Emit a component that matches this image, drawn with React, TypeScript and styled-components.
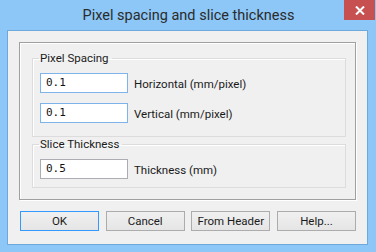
import { createGlobalStyle, styled } from "styled-components";

const GlobalStyle = createGlobalStyle`
  html, body {
    margin: 0;
    padding: 0;
    background: #8cc7f7;
  }
  body {
    font-family: Roboto, "Liberation Sans", Arial, sans-serif;
  }
`;

const Window = styled.div`
  width: 376px;
  height: 252px;
  box-sizing: border-box;
  background: #8cc7f7;
  display: flex;
  flex-direction: column;
  padding: 0 8px 7px 7px;
`;

const TitleBar = styled.div`
  height: 30px;
  display: flex;
  align-items: center;
  position: relative;
`;

const Title = styled.div`
  flex: 1;
  text-align: center;
  font-family: Roboto, "Liberation Sans", sans-serif;
  font-size: 14.5px;
  color: #2b2b2b;
  padding-top: 1px;
  padding-left: 2px;
`;

const CloseButton = styled.div`
  position: absolute;
  right: -7px;
  top: 0;
  width: 31px;
  height: 20px;
  background: #c75050;
  display: flex;
  align-items: center;
  justify-content: center;
`;

const Client = styled.div`
  flex: 1;
  background: #f0f0f0;
  border: 1px solid #6ea9dc;
  display: flex;
  flex-direction: column;
  padding: 11px 11px 12px 11px;
  box-sizing: border-box;
`;

const Frame = styled.div`
  border: 1px solid #a0a0a0;
  box-shadow: 1px 1px 0 #ffffff, inset 1px 1px 0 #ffffff;
  display: flex;
  flex-direction: column;
  padding: 8px 9px 8px 12px;
  height: 158px;
  box-sizing: border-box;
`;

const Group = styled.fieldset<{ $pad: string }>`
  margin: 0;
  border: 1px solid #dcdcdc;
  padding: ${(p) => p.$pad};
  display: flex;
  flex-direction: column;
  gap: 10px;
  box-shadow: inset 1px 1px 0 #fff;
`;

const Legend = styled.legend`
  font-size: 11.5px;
  line-height: 14px;
  color: #1a1a1a;
  padding: 0 3px 0 1px;
  margin-left: -1px;
`;

const Row = styled.div`
  display: flex;
  align-items: center;
  gap: 6px;
`;

const Field = styled.div<{ $focus?: boolean }>`
  width: 88px;
  height: 20px;
  box-sizing: border-box;
  border: 1px solid ${(p) => (p.$focus ? "#7eb4ea" : "#abadb3")};
  background: #fff;
  font-family: "DejaVu Sans Mono", "Liberation Mono", monospace;
  font-size: 11px;
  line-height: 18px;
  padding-left: 5px;
  color: #111;
`;

const Label = styled.span`
  font-size: 11.5px;
  color: #1a1a1a;
  padding-top: 2px;
`;

const ButtonRow = styled.div`
  display: flex;
  justify-content: space-between;
  margin-top: 11px;
  padding: 0 0 0 1px;
`;

const Button = styled.div<{ $default?: boolean }>`
  width: 79px;
  height: 20px;
  box-sizing: border-box;
  border: 1px solid ${(p) => (p.$default ? "#3399ff" : "#acacac")};
  background: linear-gradient(#f0f0f0, #e5e5e5);
  font-size: 11.5px;
  color: #1a1a1a;
  display: flex;
  align-items: center;
  justify-content: center;
`;

export default function App() {
  return (
    <>
      <GlobalStyle />
      <Window>
        <TitleBar>
          <Title>Pixel spacing and slice thickness</Title>
          <CloseButton>
            <svg width="10" height="9" viewBox="0 0 10 9">
              <path d="M1 0.5 L9 8.5 M9 0.5 L1 8.5" stroke="#fff" strokeWidth="2" />
            </svg>
          </CloseButton>
        </TitleBar>
        <Client>
          <Frame>
            <Group $pad="8px 8px 13px 7px">
              <Legend>Pixel Spacing</Legend>
              <Row>
                <Field $focus>0.1</Field>
                <Label>Horizontal (mm/pixel)</Label>
              </Row>
              <Row>
                <Field $focus>0.1</Field>
                <Label>Vertical (mm/pixel)</Label>
              </Row>
            </Group>
            <Group $pad="8px 8px 8px 7px">
              <Legend>Slice Thickness</Legend>
              <Row>
                <Field>0.5</Field>
                <Label>Thickness (mm)</Label>
              </Row>
            </Group>
          </Frame>
          <ButtonRow>
            <Button $default>OK</Button>
            <Button>Cancel</Button>
            <Button>From Header</Button>
            <Button>Help...</Button>
          </ButtonRow>
        </Client>
      </Window>
    </>
  );
}
